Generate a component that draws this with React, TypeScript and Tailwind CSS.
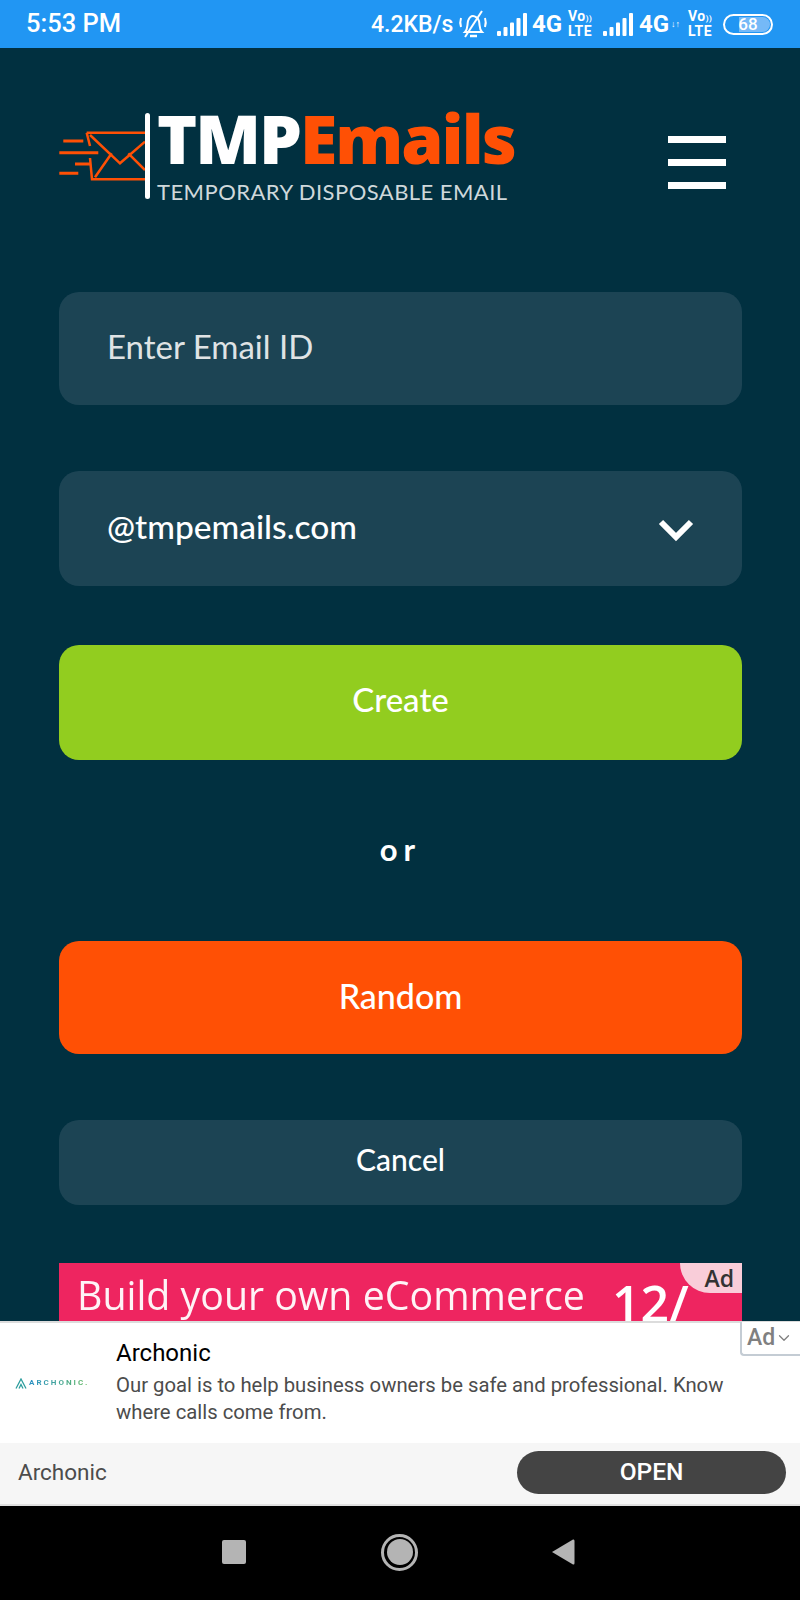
import { ChevronDown } from 'lucide-react';

function Signal() {
  return (
    <svg width="30" height="23" viewBox="0 0 30 23" className="shrink-0">
      <rect x="0" y="18" width="4" height="5" rx="1" fill="#fff" />
      <rect x="6.5" y="14" width="4" height="9" rx="1" fill="#fff" />
      <rect x="13" y="9.5" width="4" height="13.5" rx="1" fill="#fff" />
      <rect x="19.5" y="5" width="4" height="18" rx="1" fill="#fff" />
      <rect x="26" y="0" width="4" height="23" rx="1" fill="#fff" />
    </svg>
  );
}

function Volte() {
  return (
    <div className="ml-[2px] flex w-[24px] shrink-0 flex-col items-start text-[14px] font-bold leading-[13px] tracking-[0.5px] text-white">
      <span className="whitespace-nowrap">Vo<span className="text-[8px]">))</span></span>
      <span>LTE</span>
    </div>
  );
}

function StatusBar() {
  return (
    <div className="flex h-12 shrink-0 items-center bg-[#2196f3] pl-[26px] font-['Roboto',sans-serif] font-medium text-white">
      <span className="w-[345px] shrink-0 text-[25.5px] leading-none">5:53 PM</span>
      <span className="w-[86px] shrink-0 text-[23px] leading-none">4.2KB/s</span>
      <svg width="30" height="30" viewBox="0 0 30 30" fill="none" stroke="#fff" strokeWidth="2" className="ml-[1px] shrink-0">
        <path d="M7 23c3-3 2-6 3-11 1-3 3-5 5-5s5 2 6 5c1 5 0 8 3 11z" />
        <path d="M12 27h7" strokeWidth="2.5" />
        <path d="M24 2 7 28" />
        <path d="M3 9c-1 3-1 6 0 9M27 9c1 3 1 6 0 9" />
      </svg>
      <div className="ml-[9px]"><Signal /></div>
      <span className="ml-[5px] w-[34px] shrink-0 text-[24px] font-bold leading-none">4G</span>
      <Volte />
      <div className="ml-[11px]"><Signal /></div>
      <span className="ml-[6px] w-[32px] shrink-0 text-[24px] font-bold leading-none">4G</span>
      <span className="w-[15px] shrink-0 text-[9px] font-bold leading-none">↓↑</span>
      <Volte />
      <div className="relative ml-[11px] flex h-[21px] w-[50px] shrink-0 items-center justify-center rounded-full border-2 border-white">
        <div className="absolute inset-y-[1px] right-[1px] left-[14px] rounded-r-full bg-[#75b9f7]" />
        <span className="relative text-[17px] font-medium leading-none">68</span>
      </div>
    </div>
  );
}

function Logo() {
  return (
    <div className="flex items-start">
      <svg width="86" height="86" viewBox="0 0 86 86" fill="none" stroke="#ff5005" strokeWidth="2.5" className="shrink-0">
        <path d="M27.7 19.7H86M27.7 19.7 31 33M31 45l2 21.3H86" />
        <path d="M31 22 61 50.3 86 28.7M36 64.3 52.7 40.3M86 57 69.3 40.3" />
        <path d="M4.3 28h20M0.3 39.7h39M16 51h15M0.3 60.3h19" strokeWidth="3" />
      </svg>
      <div className="h-[86px] w-[5px] shrink-0 rounded-full bg-white" />
      <div className="ml-[7px] flex flex-col font-['Open_Sans',sans-serif]">
        <div className="h-[70px] whitespace-nowrap text-[68px] font-extrabold leading-[50px] tracking-[-2px]">
          <span className="text-white">TMP</span>
          <span className="text-[#ff5005]">Emails</span>
        </div>
        <span className="whitespace-nowrap font-['Lato',sans-serif] text-[22px] leading-[18px] tracking-[0.45px] text-[#cfd8db]">TEMPORARY DISPOSABLE EMAIL</span>
      </div>
    </div>
  );
}

function MenuBars() {
  return (
    <div className="mt-[23px] flex w-[58px] flex-col gap-[16px]">
      <div className="h-[7px] bg-white" />
      <div className="h-[7px] bg-white" />
      <div className="h-[7px] bg-white" />
    </div>
  );
}

function AdStrip() {
  return (
    <div className="relative mt-[58px] flex h-[70px] shrink-0 overflow-hidden bg-[#ee2560] pl-[18px] font-['Open_Sans',sans-serif] text-white">
      <span className="w-[535px] shrink-0 whitespace-nowrap text-[39.3px] leading-[64px] opacity-95">Build your own eCommerce</span>
      <span className="mt-[10px] whitespace-nowrap text-[50px] font-semibold leading-[60px]">12/</span>
      <div className="absolute top-0 right-0 flex h-[30px] w-[62px] items-start justify-end rounded-bl-[30px] bg-[#f9cdd9] pr-[8px] text-[23px] font-semibold leading-[30px] text-[#333]">Ad</div>
    </div>
  );
}

function BottomAd() {
  return (
    <div className="relative z-10 flex h-[183px] shrink-0 flex-col border-t-2 border-[#dcdcdc] bg-white font-['Roboto',sans-serif]">
      <div className="flex h-[120px] shrink-0 items-center">
        <div className="flex w-[116px] shrink-0 items-center pl-[15px]">
          <svg width="12" height="11" viewBox="0 0 12 11" fill="none" stroke="#2e9e9e" strokeWidth="1.3" className="shrink-0">
            <path d="M1 10.5 6 1l5 9.5M4 10.5l2-4 2 4" />
          </svg>
          <span className="ml-[2px] whitespace-nowrap bg-gradient-to-r from-[#2a8fc4] to-[#62b85a] bg-clip-text text-[8px] font-bold tracking-[2px] text-transparent">ARCHONIC.</span>
        </div>
        <div className="flex flex-col pb-[4px]">
          <span className="text-[24px] leading-[34px] text-black">Archonic</span>
          <span className="mt-[2px] w-[650px] text-[20.3px] leading-[27px] text-[#4c4c4c]">Our goal is to help business owners be safe and professional. Know where calls come from.</span>
        </div>
      </div>
      <div className="flex flex-1 items-center justify-between bg-[#f6f6f6] pb-[2px] pl-[18px] pr-[14px]">
        <span className="text-[22.5px] text-[#4c4c4c]">Archonic</span>
        <div className="flex h-[43px] w-[269px] items-center justify-center rounded-full bg-[#444] text-[24.5px] font-medium text-white">OPEN</div>
      </div>
      <div className="absolute -top-[1px] right-0 flex h-[34px] w-[60px] items-center justify-center rounded-bl-[4px] border-b-2 border-l-2 border-[#c4ccd4] bg-white pr-[2px] text-[23px] font-medium text-[#808080]">
        Ad
        <ChevronDown size={18} strokeWidth={1.75} />
      </div>
    </div>
  );
}

function NavBar() {
  return (
    <div className="flex h-[96px] shrink-0 items-center justify-center border-t-2 border-[#e0e0e0] bg-black pb-[2px] pr-[3px]">
      <div className="h-6 w-6 rounded-[2px] bg-[#b4b4b4]" />
      <div className="ml-[135px] mr-[133px] flex h-[37px] w-[37px] items-center justify-center rounded-full border-[3px] border-[#b4b4b4]">
        <div className="h-[26px] w-[26px] rounded-full bg-[#b4b4b4]" />
      </div>
      <svg width="24" height="28" viewBox="0 0 24 28" className="shrink-0">
        <path d="M1 14 22 1.5Q23.5 1 23.5 3V25Q23.5 27 22 26.5Z" fill="#b4b4b4" />
      </svg>
    </div>
  );
}

export default function App() {
  return (
    <div className="flex h-[1600px] w-[800px] flex-col overflow-hidden bg-[#013040] font-['Lato',sans-serif]">
      <StatusBar />
      <div className="flex min-h-0 flex-1 flex-col overflow-hidden pl-[59px] pr-[58px]">
        <div className="mt-[65px] flex h-[179px] shrink-0 items-start justify-between pr-[16px]">
          <Logo />
          <MenuBars />
        </div>
        <div className="flex h-[113px] shrink-0 items-center rounded-[20px] bg-[#1c4454] pl-[48px] pb-[4px] text-[33px] text-[#dfe3e4]">Enter Email ID</div>
        <div className="mt-[66px] flex h-[115px] shrink-0 items-center justify-between rounded-[20px] bg-[#1c4454] pl-[48px] pr-[48px] pb-[4px] text-[33.5px] font-medium text-white">
          <span>@tmpemails.com</span>
          <svg width="36" height="24" viewBox="0 0 36 24" fill="none" stroke="#fff" strokeWidth="6" className="mt-[6px]">
            <path d="M3 4l15 15L33 4" />
          </svg>
        </div>
        <div className="mt-[59px] flex h-[115px] shrink-0 items-center justify-center rounded-[20px] bg-[#92cd1f] pb-[6px] text-[33px] font-medium text-white">Create</div>
        <div className="flex h-[181px] shrink-0 items-center justify-center pb-[3px] text-[31px] font-bold tracking-[6px] text-white">or</div>
        <div className="flex h-[113px] shrink-0 items-center justify-center rounded-[20px] bg-[#ff5005] pb-[4px] text-[34px] font-medium text-white">Random</div>
        <div className="mt-[66px] flex h-[85px] shrink-0 items-center justify-center rounded-[20px] bg-[#1c4454] pb-[6px] text-[30px] font-medium text-white">Cancel</div>
        <AdStrip />
      </div>
      <BottomAd />
      <NavBar />
    </div>
  );
}
